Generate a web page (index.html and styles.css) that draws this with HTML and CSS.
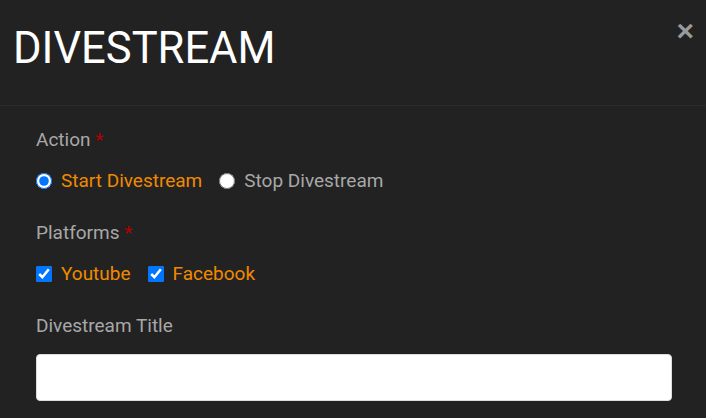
FILE: index.html
```html
<!DOCTYPE html>
<html>
<head>
<meta charset="utf-8">
<link rel="stylesheet" href="styles.css">
</head>
<body>
<div class="modal">
  <div class="modal-header">
    <h1 class="title">DIVESTREAM</h1>
    <button class="close" type="button">&times;</button>
  </div>
  <div class="modal-body">
    <div class="group">
      <div class="label">Action <span class="req">*</span></div>
      <div class="options">
        <label class="opt active"><input type="radio" name="action" checked> Start Divestream</label>
        <label class="opt"><input type="radio" name="action"> Stop Divestream</label>
      </div>
    </div>
    <div class="group">
      <div class="label">Platforms <span class="req">*</span></div>
      <div class="options">
        <label class="opt active"><input type="checkbox" checked> Youtube</label>
        <label class="opt active"><input type="checkbox" checked> Facebook</label>
      </div>
    </div>
    <div class="group group-title">
      <div class="label">Divestream Title</div>
      <input class="text-input" type="text">
    </div>
  </div>
</div>
</body>
</html>
```
FILE: styles.css
```css
html, body {
  margin: 0;
  padding: 0;
  background: #222222;
  font-family: Roboto, "Liberation Sans", sans-serif;
  height: 100%;
  overflow: hidden;
}
.modal {
  width: 706px;
}
.modal-header {
  height: 106px;
  border-bottom: 1px solid #2c2c2c;
  position: relative;
  box-sizing: border-box;
  padding: 20px 13px 0;
}
.title {
  margin: 0;
  font-weight: 400;
  font-size: 43.5px;
  line-height: 58px;
  color: #ffffff;
}
.close {
  position: absolute;
  top: 14px;
  right: 12px;
  background: none;
  border: 0;
  padding: 0;
  color: #9a9a9a;
  font-family: "Liberation Sans", sans-serif;
  font-size: 30px;
  font-weight: 700;
  line-height: 34px;
  cursor: pointer;
}
.modal-body {
  padding: 22px 34px 0 36px;
}
.group {
  margin-bottom: 28px;
}
.label {
  font-size: 19px;
  line-height: 24px;
  color: #a8a8a8;
  margin-bottom: 17px;
}
.req {
  color: #b40000;
}
.options {
  display: flex;
  gap: 17px;
  font-size: 19px;
  line-height: 24px;
}
.opt {
  display: flex;
  align-items: center;
  gap: 9px;
  color: #a8a8a8;
}
.opt.active {
  color: #f08a00;
}
.opt input {
  margin: 0;
  width: 16px;
  height: 16px;
}
.group-title .label {
  margin-bottom: 16px;
}
.text-input {
  display: block;
  width: 100%;
  height: 47px;
  box-sizing: border-box;
  border: 1px solid #dddddd;
  border-radius: 4px;
  background: #ffffff;
}
```
